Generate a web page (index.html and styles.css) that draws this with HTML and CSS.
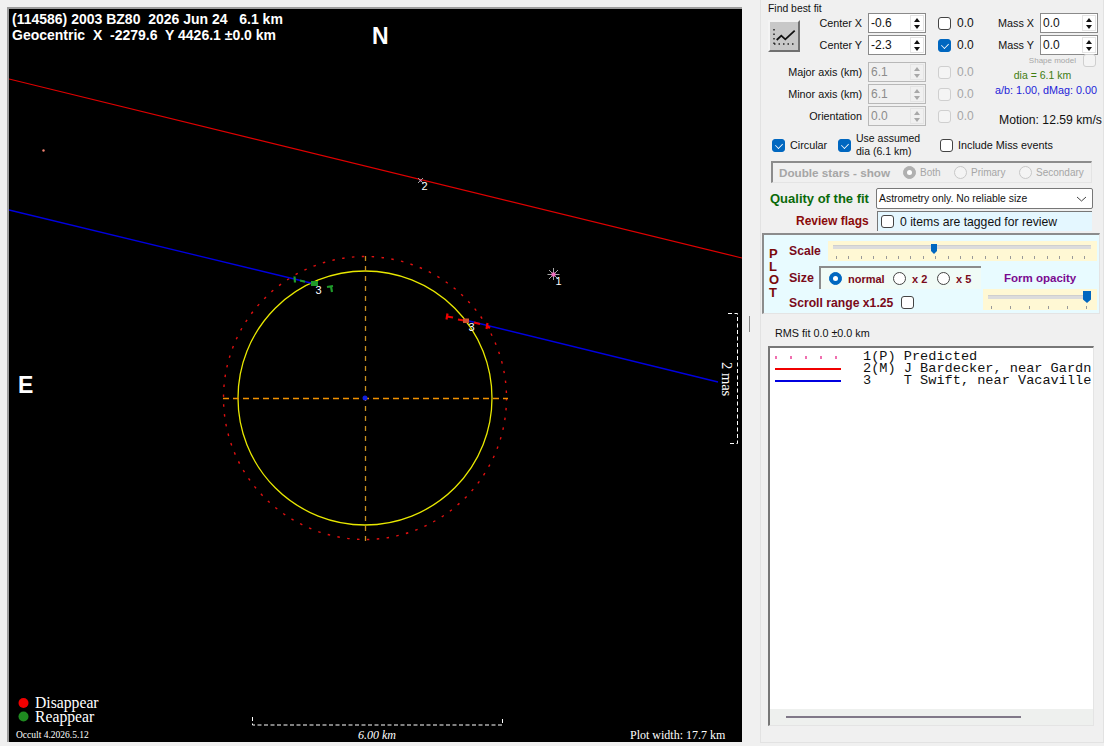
FILE: index.html
```html
<!DOCTYPE html>
<html lang="en">
<head>
  <meta charset="UTF-8">
  <title>Asteroidal occultation - fit to limb</title>
  <link rel="stylesheet" href="styles.css">
</head>
<body>
  <div class="app">
    <div class="plot">
      <svg class="plot-svg" width="733" height="733" viewBox="9 9 733 733">
        <rect x="9" y="9" width="733" height="733" fill="#000"/>
        <circle cx="365" cy="398" r="141.500" fill="none" stroke="#e01010" stroke-width="1.400" stroke-dasharray="2.500 7.400"/>
        <circle cx="365" cy="398" r="127" fill="none" stroke="#e8e800" stroke-width="1.300"/>
        <line x1="223" y1="398.500" x2="508" y2="398.500" stroke="#f09000" stroke-width="1.300" stroke-dasharray="6 4"/>
        <line x1="365.500" y1="256" x2="365.500" y2="541" stroke="#c89020" stroke-width="1.300" stroke-dasharray="5 5"/>
        <circle cx="365" cy="398" r="2.500" fill="#1020e0"/>
        <line x1="9" y1="79" x2="742" y2="258" stroke="#e00000" stroke-width="1.200"/>
        <line x1="9" y1="210" x2="315" y2="284" stroke="#0000e0" stroke-width="1.300"/>
        <line x1="465" y1="320" x2="718" y2="382" stroke="#0000e0" stroke-width="1.300"/>
        <circle cx="43.500" cy="150.500" r="1.200" fill="#f08070"/>
        <!-- event 2 -->
        <path d="M418 178l5 5M423 178l-5 5" stroke="#a0a0a0" stroke-width="1"/>
        <circle cx="420.500" cy="180.500" r="1" fill="#e080c0"/>
        <!-- event 1 star -->
        <path d="M549 270l9 9M558 270l-9 9M553.500 268v12M547.500 274.500h12" stroke="#a8a8a8" stroke-width="1"/>
        <circle cx="553.500" cy="274.500" r="2.200" fill="#f070c0"/>
        <!-- reappear marks -->
        <g stroke="#1f9a2a" fill="none" stroke-width="2.200">
          <path d="M294.500 276.500l.5 6"/>
          <path d="M300 280.500l5 1.200"/>
          <path d="M327 287l6-1M331 286.500l1 5.500"/>
        </g>
        <rect x="311" y="281" width="7" height="5" fill="#1f9a2a"/>
        <!-- disappear marks -->
        <g stroke="#f00000" fill="none" stroke-width="2.200">
          <path d="M447.500 313.500l-1 6M447 316.500l6 1"/>
          <path d="M458 319.500l6 1"/>
          <path d="M474 322.500l6 1.500"/>
          <path d="M487.500 323l-1 6M487 326l3 2"/>
        </g>
        <rect x="463" y="318.500" width="6" height="4.500" fill="#d05030"/>
        <g class="num">
          <text x="555.500" y="285">1</text>
          <text x="421.500" y="190">2</text>
          <text x="315.500" y="294">3</text>
          <text x="468.500" y="331">3</text>
        </g>
        <text class="head" x="12" y="24" xml:space="preserve">(114586) 2003 BZ80  2026 Jun 24   6.1 km</text>
        <text class="head" x="12" y="40" xml:space="preserve">Geocentric  X  -2279.6  Y 4426.1 ±0.0 km</text>
        <text class="compass" x="372" y="44">N</text>
        <text class="compass" x="18" y="393">E</text>
        <circle cx="23.500" cy="703" r="5" fill="#f00000"/>
        <circle cx="23.500" cy="716.500" r="5" fill="#1f8a20"/>
        <text class="legend" x="35" y="708">Disappear</text>
        <text class="legend" x="35" y="722">Reappear</text>
        <text class="version" x="16" y="738">Occult 4.2026.5.12</text>
        <path d="M252.500 717v8h250v-8" fill="none" stroke="#fff" stroke-dasharray="4 2.500"/>
        <text class="scale-label" x="377" y="739" text-anchor="middle">6.00 km</text>
        <text class="width-label" x="630" y="739">Plot width: 17.7 km</text>
        <path d="M728 313.500h9.500v130h-9.500" fill="none" stroke="#fff" stroke-dasharray="4 2.500"/>
        <text class="mas" transform="translate(722 362) rotate(90)">2 mas</text>
      </svg>
    </div>

    <div class="splitter"><span class="grip"></span></div>

    <div class="side">
      <div class="fit">
        <div class="fit-title">Find best fit</div>
        <div class="fit-body">
          <div class="fit-grid">
            <button class="chart-btn">
              <svg width="26" height="24" viewBox="0 0 26 24">
                <path d="M3 5v16M3 20h22" fill="none" stroke="#222" stroke-width="1.500" stroke-dasharray="1.500 3"/>
                <path d="M5.700 16l4.600-4.300 4 3.600 9.400-8.600" fill="none" stroke="#111" stroke-width="1.800"/>
              </svg>
            </button>
            <label class="lbl lbl-r1">Center X</label>
            <div class="spin"><span class="spin-val">-0.6</span><span class="spin-btns"><i class="up"></i><i class="down"></i></span></div>
            <div class="chk-val"><span class="chk"></span>0.0</div>

            <label class="lbl lbl-r2">Center Y</label>
            <div class="spin"><span class="spin-val">-2.3</span><span class="spin-btns"><i class="up"></i><i class="down"></i></span></div>
            <div class="chk-val"><span class="chk on"></span>0.0</div>

            <label class="lbl row-end">Major axis (km)</label>
            <div class="spin off row-end"><span class="spin-val">6.1</span><span class="spin-btns"><i class="up"></i><i class="down"></i></span></div>
            <div class="chk-val off row-end"><span class="chk"></span>0.0</div>

            <label class="lbl">Minor axis (km)</label>
            <div class="spin off"><span class="spin-val">6.1</span><span class="spin-btns"><i class="up"></i><i class="down"></i></span></div>
            <div class="chk-val off"><span class="chk"></span>0.0</div>

            <label class="lbl">Orientation</label>
            <div class="spin off"><span class="spin-val">0.0</span><span class="spin-btns"><i class="up"></i><i class="down"></i></span></div>
            <div class="chk-val off"><span class="chk"></span>0.0</div>
          </div>

          <div class="mass">
            <div class="mass-row"><label>Mass X</label><div class="spin"><span class="spin-val">0.0</span><span class="spin-btns"><i class="up"></i><i class="down"></i></span></div></div>
            <div class="mass-row"><label>Mass Y</label><div class="spin"><span class="spin-val">0.0</span><span class="spin-btns"><i class="up"></i><i class="down"></i></span></div></div>
            <div class="shape"><span>Shape model</span><span class="chk faint"></span></div>
            <div class="dia">dia = 6.1 km</div>
            <div class="ratio">a/b: 1.00, dMag: 0.00</div>
            <div class="motion">Motion: 12.59 km/s</div>
          </div>
        </div>

        <div class="opts">
          <div class="opt opt-circ"><span class="chk on"></span>Circular</div>
          <div class="opt opt-dia"><span class="chk on"></span><span class="two-line">Use assumed<br>dia (6.1 km)</span></div>
          <div class="opt"><span class="chk"></span>Include Miss events</div>
        </div>
      </div>

      <div class="double">
        <span class="double-title">Double stars - show</span>
        <span class="radio sel off"></span><span class="double-item both">Both</span>
        <span class="radio off"></span><span class="double-item prim">Primary</span>
        <span class="radio off"></span><span class="double-item">Secondary</span>
      </div>

      <div class="quality">
        <span class="quality-lbl">Quality of the fit</span>
        <div class="select">Astrometry only. No reliable size
          <svg width="11" height="6" viewBox="0 0 11 6"><path d="M1 1l4.500 4L10 1" fill="none" stroke="#444"/></svg>
        </div>
      </div>

      <div class="review">
        <span class="review-lbl">Review flags</span>
        <div class="review-box"><span class="chk"></span>0 items are tagged for review</div>
      </div>

      <div class="plot-opts">
        <div class="plot-word"><span>P</span><span>L</span><span>O</span><span>T</span></div>
        <div class="plot-rows">
          <div class="scale-row">
            <span class="maroon scale-lbl">Scale</span>
            <div class="slider scale-slider"><span class="track"></span><span class="thumb"></span><span class="ticks"></span></div>
          </div>
          <div class="size-row">
            <span class="maroon size-lbl">Size</span>
            <div class="size-box">
              <span class="radio sel"></span><span class="size-opt">normal</span>
              <span class="radio"></span><span class="size-opt">x 2</span>
              <span class="radio"></span><span class="size-opt">x 5</span>
            </div>
            <span class="opacity-lbl">Form opacity</span>
          </div>
          <div class="scroll-row">
            <span class="maroon scroll-lbl">Scroll range x1.25</span><span class="chk"></span>
            <div class="slider opacity-slider"><span class="track"></span><span class="thumb"></span><span class="ticks"></span></div>
          </div>
        </div>
      </div>

      <div class="rms">RMS fit 0.0 ±0.0 km</div>

      <div class="events">
        <div class="event-list">
          <div class="event"><span class="key key-dots"></span><span class="event-txt">1(P) Predicted</span></div>
          <div class="event"><span class="key key-red"></span><span class="event-txt">2(M) J Bardecker, near Gardn</span></div>
          <div class="event"><span class="key key-blue"></span><span class="event-txt">3    T Swift, near Vacaville</span></div>
        </div>
        <div class="hscroll"><span class="hthumb"></span></div>
      </div>
    </div>
  </div>
</body>
</html>
```

FILE: styles.css
```css
* {
  box-sizing: border-box;
}

html, body {
  margin: 0;
  height: 100%;
  overflow: hidden;
}

body {
  background: #f0f0f0;
  font-family: 'Liberation Sans', Arial, sans-serif;
  font-size: 10.8px;
  color: #111;
}

.app {
  display: flex;
  width: 1104px;
  height: 746px;
}

/* left drawing */
.plot {
  margin: 7px 0 0 7px;
  width: 735px;
  height: 735px;
  border-top: 2px solid #9c9c9c;
  border-left: 2px solid #9c9c9c;
}

.plot-svg {
  display: block;
}

.head {
  font: bold 14px 'Liberation Sans', Arial, sans-serif;
  fill: #fff;
  white-space: pre;
}

.compass {
  font: bold 23px 'Liberation Sans', Arial, sans-serif;
  fill: #fff;
}

.num text {
  font: 11px 'Liberation Sans', Arial, sans-serif;
  fill: #fff;
}

.legend {
  font: 15.700px 'Liberation Serif', 'Times New Roman', serif;
  fill: #fff;
}

.version {
  font: 9.500px 'Liberation Serif', 'Times New Roman', serif;
  fill: #fff;
}

.scale-label {
  font: italic 12px 'Liberation Serif', 'Times New Roman', serif;
  fill: #fff;
}

.width-label {
  font: 12px 'Liberation Serif', 'Times New Roman', serif;
  fill: #fff;
}

.mas {
  font: 14.500px 'Liberation Serif', 'Times New Roman', serif;
  fill: #fff;
}

.splitter {
  width: 18px;
  padding: 316px 0 0 7px;
}

.grip {
  display: block;
  width: 1px;
  height: 16px;
  background: #8a8a8a;
}

/* right side panel */
.side {
  width: 344px;
  height: 743px;
  border: 1px solid #e2e2e2;
  border-top: none;
  padding-left: 1px;
}

.fit {
  height: 158px;
}

.fit-title {
  padding: 3px 0 0 6px;
  height: 13px;
  line-height: 12px;
  font-size: 10.400px;
}

.fit-body {
  display: flex;
  padding-left: 6px;
}

.fit-grid {
  display: grid;
  grid-template-columns: 94px 58px 67px;
  grid-template-rows: 20px 20px 25px 20px 20px;
  column-gap: 6px;
  row-gap: 2px;
  width: 231px;
  align-items: center;
}

.chart-btn {
  grid-row: 1 / 3;
  grid-column: 1;
  justify-self: start;
  align-self: start;
  margin-top: 7px;
  width: 32px;
  height: 32px;
  padding: 0;
  background: #c8c8c8;
  border: 2px solid;
  border-color: #f4f4f4 #707070 #707070 #f4f4f4;
  display: flex;
  align-items: center;
  justify-content: center;
}

.lbl {
  grid-column: 1;
  text-align: right;
  white-space: nowrap;
}

.lbl-r1 {
  grid-row: 1;
}

.lbl-r2 {
  grid-row: 2;
}

.row-end {
  align-self: end;
  height: 20px;
  line-height: 20px;
}

.spin {
  display: flex;
  flex: none;
  width: 58px;
  height: 20px;
  background: #fff;
  border: 1px solid #8a8a8a;
  align-items: center;
}

.spin-val {
  flex: 1;
  padding-left: 2px;
  font-size: 12px;
}

.spin-btns {
  display: flex;
  flex-direction: column;
  width: 14px;
  margin-right: 1px;
  height: 16px;
  border: 1px solid #e4e4e4;
}

.spin-btns i {
  flex: 1;
  display: flex;
  align-items: center;
  justify-content: center;
}

.spin-btns i::after {
  content: "";
  border-left: 3px solid transparent;
  border-right: 3px solid transparent;
}

.spin-btns .up::after {
  border-bottom: 4px solid #111;
}

.spin-btns .down::after {
  border-top: 4px solid #111;
}

.spin.off {
  background: #f0f0f0;
  border-color: #b8b8b8;
}

.spin.off .spin-val {
  color: #8c8c8c;
}

.spin.off .up::after {
  border-bottom-color: #a8a8a8;
}

.spin.off .down::after {
  border-top-color: #a8a8a8;
}

.chk-val {
  display: flex;
  align-items: center;
  gap: 6px;
  padding-left: 6px;
  font-size: 12px;
}

.chk-val.off {
  color: #a6a6a6;
}

.chk {
  display: inline-block;
  position: relative;
  flex: none;
  width: 13px;
  height: 13px;
  background: #fff;
  border: 1px solid #444;
  border-radius: 3px;
}

.chk.on {
  background: #0067c0;
  border-color: #0067c0;
}

.chk.on::after {
  content: "";
  position: absolute;
  left: 3px;
  top: 1px;
  width: 5px;
  height: 7px;
  border: solid #fff;
  border-width: 0 1.500px 1.500px 0;
  transform: rotate(45deg) scale(.8);
}

.off .chk {
  border-color: #cfcfcf;
  background: #f4f4f4;
}

.chk.faint {
  border-color: #cfcfcf;
  background: #f4f4f4;
}

.mass {
  width: 99px;
}

.mass-row {
  display: flex;
  align-items: center;
  justify-content: flex-end;
  gap: 6px;
  height: 20px;
  margin-bottom: 2px;
  white-space: nowrap;
}

.shape {
  display: flex;
  justify-content: flex-end;
  align-items: center;
  gap: 7px;
  height: 13px;
  margin-top: -3px;
  padding-right: 2px;
  font-size: 8px;
  color: #a8a8a8;
  white-space: nowrap;
}

.dia {
  margin-top: 2px;
  padding-right: 12px;
  color: #3f7d10;
  font-size: 10.500px;
  text-align: center;
}

.ratio {
  margin: 3px 0 0 -4px;
  color: #1c1cd8;
  font-size: 10.800px;
  white-space: nowrap;
}

.motion {
  margin-top: 17px;
  font-size: 12.200px;
  white-space: nowrap;
}

.opts {
  display: flex;
  align-items: center;
  padding: 5px 0 0 10px;
}

.opt {
  display: flex;
  align-items: center;
  gap: 5px;
}

.opt-circ {
  width: 66px;
}

.opt-dia {
  width: 102px;
}

.two-line {
  font-size: 10.500px;
  line-height: 13px;
  white-space: nowrap;
}

/* double stars */
.double {
  display: flex;
  align-items: center;
  width: 321px;
  height: 22px;
  margin: 3px 0 0 9px;
  border: 1px solid #e4e4e4;
  border-top: 2px solid #8c8c8c;
  border-left: 2px solid #8c8c8c;
  padding-left: 6px;
  color: #a6a6a6;
  white-space: nowrap;
}

.double-title {
  width: 124px;
  font-size: 11.700px;
  font-weight: bold;
}

.double-item {
  font-size: 10px;
  margin-left: 4px;
}

.both {
  width: 34px;
}

.prim {
  width: 48px;
}

.radio {
  display: inline-block;
  flex: none;
  width: 13px;
  height: 13px;
  border: 1px solid #444;
  border-radius: 50%;
  background: #fff;
  position: relative;
}

.radio.sel {
  border-color: #0067c0;
  background: #0067c0;
}

.radio.sel::after {
  content: "";
  position: absolute;
  left: 3px;
  top: 3px;
  width: 5px;
  height: 5px;
  border-radius: 50%;
  background: #fff;
}

.radio.off {
  border-color: #c8c8c8;
  background: #f4f4f4;
}

.radio.sel.off {
  background: #b0b0b0;
  border-color: #b0b0b0;
}

.quality,
.review {
  display: flex;
  align-items: center;
  margin-left: 8px;
  white-space: nowrap;
}

.quality {
  margin-top: 5px;
  height: 21px;
}

.quality-lbl {
  width: 106px;
  font-size: 13px;
  font-weight: bold;
  color: #0a6a0a;
}

.select {
  display: flex;
  align-items: center;
  justify-content: space-between;
  width: 217px;
  height: 21px;
  padding: 0 5px 0 2px;
  background: #fff;
  border: 1px solid #777;
  border-radius: 2px;
  font-size: 10.400px;
}

.review {
  margin-top: 2px;
  height: 20px;
}

.review-lbl {
  width: 107px;
  padding-left: 26px;
  font-size: 12px;
  font-weight: bold;
  color: #8a0a0a;
}

.review-box {
  display: flex;
  align-items: center;
  gap: 6px;
  width: 215px;
  height: 20px;
  padding-left: 3px;
  background: #e4f7ff;
  border-top: 1px solid #777;
  border-left: 1px solid #777;
  font-size: 12.200px;
}

/* plot options */
.plot-opts {
  display: flex;
  width: 338px;
  height: 81px;
  margin-top: 2px;
  background: #e8fbff;
  border: 1px solid #e4e4e4;
  border-top: 2px solid #8c8c8c;
  border-left: 2px solid #8c8c8c;
}

.plot-word {
  display: flex;
  flex-direction: column;
  width: 25px;
  padding: 12px 0 0 5px;
  font-weight: bold;
  font-size: 13px;
  line-height: 13px;
  color: #7a0a0a;
}

.plot-rows {
  flex: 1;
}

.maroon {
  font-size: 12.200px;
  font-weight: bold;
  color: #7a0a1a;
}

.scale-row {
  display: flex;
  align-items: center;
  height: 20px;
  margin-top: 6px;
}

.scale-lbl {
  width: 39px;
}

.slider {
  position: relative;
  height: 20px;
  background: #fff8d4;
}

.scale-slider {
  width: 269px;
}

.opacity-slider {
  width: 114px;
  height: 21px;
  margin-left: auto;
  margin-right: 2px;
}

.track {
  position: absolute;
  left: 5px;
  right: 6px;
  top: 4px;
  height: 4px;
  background: #dcdcdc;
  border-top: 1px solid #cfcfcf;
}

.opacity-slider .track {
  top: 6px;
}

.thumb {
  position: absolute;
  top: 3px;
  width: 6px;
  height: 10px;
  background: #0067c0;
  clip-path: polygon(0 0, 100% 0, 100% 70%, 50% 100%, 0 70%);
}

.scale-slider .thumb {
  left: 103px;
}

.opacity-slider .thumb {
  left: 100px;
  top: 2px;
  width: 8px;
  height: 12px;
}

.ticks {
  position: absolute;
  left: 8px;
  right: 8px;
  bottom: 2px;
  height: 3px;
  background: repeating-linear-gradient(90deg, #999 0 1px, transparent 1px 12.400px);
}

.opacity-slider .ticks {
  bottom: 1px;
  background: repeating-linear-gradient(90deg, #999 0 1px, transparent 1px 19px);
}

.size-row {
  display: flex;
  align-items: center;
  height: 23px;
  margin-top: 5px;
}

.size-lbl {
  width: 30px;
  font-size: 12.500px;
}

.size-box {
  display: flex;
  align-items: center;
  flex: none;
  width: 162px;
  height: 23px;
  padding-left: 8px;
  background: #f0fbf6;
  border-top: 2px solid #8c8c8c;
  border-left: 2px solid #8c8c8c;
}

.size-opt {
  flex: none;
  font-size: 11px;
  font-weight: bold;
  color: #7a0a1a;
  margin-left: 6px;
  width: 45px;
}

.size-opt:nth-child(4) {
  width: 25px;
}

.size-opt:last-child {
  width: auto;
}

.opacity-lbl {
  margin-left: 23px;
  font-size: 11.500px;
  font-weight: bold;
  color: #7a0a90;
  white-space: nowrap;
}

.scroll-row {
  display: flex;
  align-items: flex-end;
  height: 21px;
  gap: 8px;
}

.scroll-lbl {
  line-height: 14px;
}

.scroll-row .chk {
  margin-bottom: 1px;
}

.rms {
  margin: 12px 0 0 13px;
  height: 14px;
  line-height: 14px;
  font-size: 10.800px;
}

/* events list */
.events {
  display: flex;
  flex-direction: column;
  width: 326px;
  height: 380px;
  margin: 6px 0 0 6px;
  background: #fff;
  border-top: 2px solid #777;
  border-left: 2px solid #777;
  border-right: 1px solid #e4e4e4;
  border-bottom: 1px solid #e4e4e4;
  overflow: hidden;
}

.event-list {
  flex: 1;
  padding-top: 3px;
}

.event {
  display: flex;
  align-items: center;
  height: 12px;
}

.event-txt {
  font: 13.600px/12px 'Liberation Mono', 'Courier New', monospace;
  white-space: pre;
  color: #111;
  margin-left: 22px;
}

.key {
  flex: none;
  width: 66px;
  margin-left: 5px;
}

.key-dots {
  height: 3px;
  background: repeating-linear-gradient(90deg, #f070b0 0 2px, transparent 2px 15px);
}

.key-red {
  height: 2px;
  background: #f00000;
}

.key-blue {
  height: 2px;
  background: #0000e0;
}

.hscroll {
  height: 16px;
  background: #eef0ee;
  padding: 7px 0 0 16px;
}

.hthumb {
  display: block;
  width: 235px;
  height: 2px;
  background: #807888;
}
```
